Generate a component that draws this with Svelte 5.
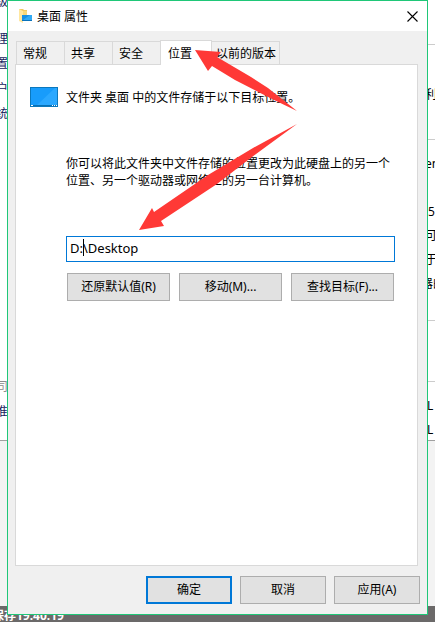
<script>
  let tabs = ['常规', '共享', '安全', '位置', '以前的版本'];
  let active = '位置';
  let path = 'D:\\Desktop';

  // page behind the dialog, only the edges can be seen
  let leftGroups = [
    { lines: ['高级', '管理', '设置', '用户', '系统'], cls: 'settings' },
    { lines: ['公司', '标准'], cls: 'standard' },
  ];
  let rightGroups = [
    { lines: [], cls: 'head' },
    { lines: ['利'], cls: 'rights' },
    { lines: ['en', 'i5', '可', '于', '器的'], cls: 'specs' },
    { lines: [], cls: 'name' },
    { lines: ['L', 'L'], cls: 'group' },
  ];
</script>

<div class="desktop">
  <div class="backdrop">
    <div class="page">
      <div class="left">
        {#each leftGroups as group}
          <div class={group.cls}>
            {#each group.lines as line}
              <p>{line}</p>
            {/each}
          </div>
        {/each}
      </div>
      <div class="right">
        {#each rightGroups as group}
          <div class={group.cls}>
            {#each group.lines as line}
              <p>{line}</p>
            {/each}
          </div>
        {/each}
      </div>
    </div>
    <div class="status">保存19:40:19</div>
  </div>

  <div class="dialog" role="dialog" aria-labelledby="title">
    <header>
      <svg class="folder" width="16" height="16" viewBox="0 0 16 16">
        <path d="M1 1h4l1 1h3v11H1z" fill="#f0c95f" />
        <path d="M1 1l4 2v12l-4-2z" fill="#ffe7a0" />
        <path d="M5 3h4v10H5z" fill="#f9d978" />
        <rect x="4" y="7" width="10" height="6" fill="#1590e4" />
        <path d="M5 12l7-5h2v5z" fill="#31aaf5" />
        <path d="M4 12h10v1H4z" fill="#0872bc" />
      </svg>
      <h1 id="title">桌面 属性</h1>
      <button class="close" aria-label="关闭">
        <svg width="11" height="11" viewBox="0 0 11 11">
          <path d="M.5.5l10 10M10.5.5l-10 10" stroke="#000" stroke-width="1.1" />
        </svg>
      </button>
    </header>

    <div class="content">
      <div class="tabs" role="tablist">
        {#each tabs as tab}
          <button role="tab" class="tab" class:active={tab === active} aria-selected={tab === active} on:click={() => (active = tab)}>{tab}</button>
        {/each}
      </div>

      <div class="panel">
        <div class="target">
          <svg class="screen" width="28" height="20" viewBox="0 0 28 20">
            <rect x=".5" y=".5" width="27" height="19" fill="#189cfb" stroke="#0b78bd" />
            <path d="M7 18L25 1h2v17z" fill="#2ba8ff" />
            <path d="M1 18.500h26" stroke="#0870b5" />
            <path d="M1 18.500h2M22 18.500h1M24 18.500h1M26 18.500h1" stroke="#fff" />
          </svg>
          <p>文件夹 桌面 中的文件存储于以下目标位置。</p>
        </div>

        <div class="body">
          <p class="hint">你可以将此文件夹中文件存储的位置更改为此硬盘上的另一个位置、另一个驱动器或网络上的另一台计算机。</p>
          <div class="field">
            <input type="text" aria-label="目标位置" bind:value={path} />
            <span class="caret"></span>
          </div>
          <div class="actions">
            <button>还原默认值(R)</button>
            <button>移动(M)...</button>
            <button>查找目标(F)...</button>
          </div>
        </div>
      </div>

      <footer>
        <button class="ok">确定</button>
        <button>取消</button>
        <button>应用(A)</button>
      </footer>
    </div>

    <svg class="arrows" width="170" height="190" viewBox="135 45 170 190" aria-hidden="true">
      <path d="M195 50L221 52L217 57L251 77L268 88L297 111L272 99L235 80L212 66L208 71z" />
      <path d="M139 230L152 208L154 212L208 175L253 148L297 124L248 160L217 184L161 221L164 226z" />
    </svg>
  </div>
</div>

<style>
  :global(body) {
    margin: 0;
    background: #6b6969;
  }

  .desktop {
    display: grid;
    grid-template-columns: minmax(0, 1fr);
    overflow: hidden;
    font-family: 'Noto Sans', 'Noto Sans CJK SC', sans-serif;
    font-size: 12px;
    line-height: 17px;
    color: #000;
  }

  p,
  h1 {
    margin: 0;
    font-size: 12px;
    font-weight: normal;
  }

  button {
    font: inherit;
    color: inherit;
    padding: 0;
    box-sizing: border-box;
    white-space: nowrap;
  }

  .backdrop,
  .dialog {
    grid-area: 1 / 1;
  }

  /* page in the back */
  .backdrop {
    display: flex;
    flex-direction: column;
    min-height: 100vh;
    background: #f3f3f3;
  }

  .page {
    display: flex;
    justify-content: space-between;
    height: 440px;
    background: #fff;
    border-bottom: 1px solid #a0a0a0;
  }

  .left,
  .right {
    width: 8px;
    overflow: hidden;
    line-height: 25px;
  }

  .left {
    display: flex;
    flex-direction: column;
    justify-content: space-between;
    color: #16225c;
  }

  .left p {
    display: flex;
    justify-content: flex-end;
    white-space: nowrap;
  }

  .settings p:first-child {
    line-height: 24px;
    margin-top: -10px;
    margin-bottom: 12px;
  }

  .standard {
    padding-bottom: 16px;
  }

  .standard p:first-child {
    color: #8c8c8c;
  }

  .right p {
    white-space: nowrap;
    line-height: 24px;
    text-indent: -2px;
  }

  .right div {
    box-sizing: border-box;
    border-bottom: 1px solid #ccc;
  }

  .right .head {
    height: 45px;
  }

  .right .rights {
    height: 95px;
    padding-top: 38px;
  }

  .right .specs {
    height: 181px;
    padding-top: 12px;
  }

  .right .specs p:first-child {
    margin-bottom: 24px;
  }

  .right .specs p:last-child {
    text-indent: -6px;
  }

  .right .name {
    height: 61px;
  }

  .right .group {
    padding-top: 12px;
    border: 0;
  }

  .right .group p {
    text-indent: 0;
  }

  .status {
    margin-top: auto;
    height: 16px;
    text-indent: -8px;
    line-height: 20px;
    background: #6b6969;
    color: #fff;
    font-weight: bold;
    white-space: nowrap;
    overflow: hidden;
  }

  /* dialog */
  .dialog {
    position: relative;
    align-self: start;
    margin: 0 7px 7px;
    border: 1px solid #1fc778;
    background: #f0f0f0;
  }

  header {
    display: flex;
    align-items: center;
    height: 30px;
    padding: 0 9px 0 10px;
    background: #fff;
  }

  h1 {
    flex: 1;
    margin-left: 3px;
  }

  .close {
    display: flex;
    border: 0;
    background: none;
  }

  .content {
    padding: 9px 7px 10px;
  }

  .tabs {
    display: flex;
    align-items: flex-end;
    padding-left: 1px;
  }

  .tab {
    height: 23px;
    padding: 0 17px 0 6px;
    border: 1px solid #d9d9d9;
    border-width: 1px 1px 0 0;
    background: #f0f0f0;
  }

  .tab:first-child {
    border-left-width: 1px;
  }

  .tab:last-child {
    padding: 0 3px 0 4px;
  }

  .tab.active {
    height: 25px;
    padding: 0 19px 0 7px;
    margin: 0 0 -1px -1px;
    border-left-width: 1px;
    background: #fff;
    z-index: 1;
  }

  .panel {
    box-sizing: border-box;
    min-height: 502px;
    margin-right: 2px;
    padding: 20px 22px 20px 14px;
    border: 1px solid #d9d9d9;
    background: #fff;
  }

  .target {
    display: flex;
    align-items: center;
    gap: 8px;
    height: 24px;
  }

  .body {
    margin: 46px 0 0 36px;
  }

  .field {
    position: relative;
    margin-top: 47px;
  }

  input {
    display: block;
    box-sizing: border-box;
    width: 100%;
    height: 26px;
    padding: 0 3px 2px;
    border: 1px solid #0078d7;
    background: #fff;
    font: inherit;
    font-size: 13px;
    color: #000;
    outline: none;
  }

  .caret {
    position: absolute;
    left: 17px;
    top: 3px;
    width: 1px;
    height: 17px;
    background: #000;
  }

  .actions {
    display: flex;
    gap: 9px;
    margin: 11px 1px 0;
  }

  .actions button,
  footer button {
    height: 28px;
    padding-bottom: 2px;
    border: 1px solid #adadad;
    background: #e1e1e1;
  }

  .actions button {
    flex: 1;
  }

  footer {
    display: flex;
    justify-content: flex-end;
    gap: 8px;
    margin-top: 10px;
  }

  footer button {
    width: 86px;
  }

  footer .ok {
    border: 2px solid #0078d7;
  }

  .arrows {
    position: absolute;
    left: 127px;
    top: 44px;
    z-index: 2;
    pointer-events: none;
    fill: #ff3936;
  }
</style>
